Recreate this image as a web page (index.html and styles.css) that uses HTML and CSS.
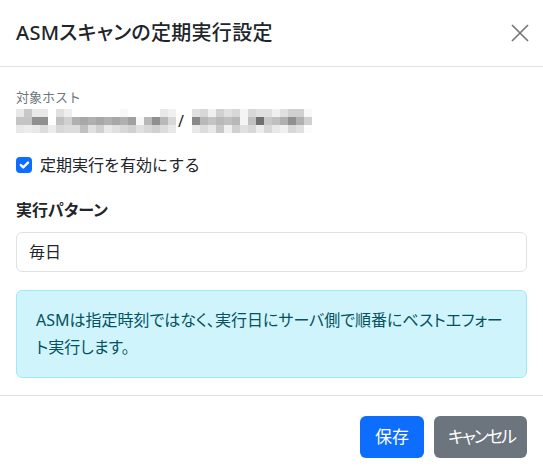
FILE: index.html
```html
<!DOCTYPE html>
<html lang="ja">
<head>
    <meta charset="UTF-8">
    <meta name="viewport" content="width=device-width, initial-scale=1">
    <title>ASMスキャンの定期実行設定</title>
    <link rel="stylesheet" href="styles.css">
</head>
<body>
    <div class="modal">
        <div class="modal-header">
            <h5 class="modal-title">ASMスキャンの定期実行設定</h5>
            <button class="btn-close" type="button" aria-label="閉じる">
                <svg viewBox="0 0 18 18" width="18" height="18">
                    <path d="M1 1L17 17M17 1L1 17" stroke="currentColor" stroke-width="1.7" fill="none"/>
                </svg>
            </button>
        </div>

        <div class="modal-body">
            <div class="field-caption">対象ホスト</div>
            <div class="host-line">
                <span class="mosaic" id="hostName"></span>
                <span class="sep">/</span>
                <span class="mosaic" id="hostAddr"></span>
            </div>

            <label class="form-check">
                <input type="checkbox" class="check-input" checked>
                <span class="check-box">
                    <svg viewBox="0 0 20 20" width="16" height="16">
                        <path d="m6 10 3 3 6-6" stroke="#fff" stroke-width="3" fill="none" stroke-linecap="round" stroke-linejoin="round"/>
                    </svg>
                </span>
                <span class="check-label">定期実行を有効にする</span>
            </label>

            <div class="form-label">実行パターン</div>
            <div class="form-select">毎日</div>

            <div class="alert-info">ASMは指定時刻ではなく、実行日にサーバ側で順番にベストエフォート実行します。</div>
        </div>

        <div class="modal-footer">
            <button class="btn btn-primary" type="button">保存</button>
            <button class="btn btn-secondary" type="button">キャンセル</button>
        </div>
    </div>

    <script>
        // masked host values, one grey level per 8px cell, three rows each
        const masks = {
            hostName: [
                'e8 c8 e8 e8 ff e0 ee ff ff ff ff ff ff f8 ff ff ff ff e8 f0',
                'c4 c4 90 90 ff c0 d0 b0 a8 b0 a8 b0 a8 b0 a0 f8 b8 90 b8 d8',
                'e8 ec e8 dc ec d8 dc dc c0 e0 d0 e8 e0 d8 d0 e0 d8 d0 dc e8'
            ],
            hostAddr: [
                'e0 d8 f0 d0 e0 d8 f4 d8 e0 e0 f0 e0 d0 d0 f8',
                '88 b8 c4 b8 c0 b8 f4 c0 70 c8 c0 b0 90 b0 d0',
                'e8 dc e8 c8 f0 d0 e0 d8 ec d8 e8 f0 d8 e0 fc'
            ]
        };

        Object.keys(masks).forEach((id) => {
            const box = document.getElementById(id);
            const rows = masks[id].map(r => r.split(' '));
            box.style.gridTemplateColumns = `repeat(${rows[0].length}, 8px)`;
            rows.forEach((row) => {
                row.forEach((g) => {
                    const cell = document.createElement('i');
                    cell.style.background = `#${g}${g}${g}`;
                    box.appendChild(cell);
                });
            });
        });
    </script>
</body>
</html>
```

FILE: styles.css
```css
* {
    box-sizing: border-box;
}

body {
    margin: 0;
    background-color: #fff;
    color: #212529;
    font-family: "Noto Sans", "Noto Sans CJK JP", sans-serif;
    font-size: 16px;
    line-height: 1.5;
    font-feature-settings: "palt";
}

.modal {
    width: 543px;
    height: 474px;
    display: flex;
    flex-direction: column;
}

.modal-header {
    display: flex;
    align-items: center;
    padding: 16px;
    border-bottom: 1px solid #dee2e6;
    height: 67px;
}

.modal-title {
    margin: 0;
    font-size: 20px;
    font-weight: 500;
    line-height: 34px;
    letter-spacing: 0.3px;
}

.btn-close {
    margin-left: auto;
    margin-right: -2px;
    padding: 0;
    border: none;
    background: none;
    color: #777;
    width: 18px;
    height: 18px;
    display: flex;
}

.modal-body {
    padding: 20px 16px 17px;
}

.field-caption {
    font-size: 13px;
    line-height: 21px;
    color: #6c757d;
    font-feature-settings: normal;
}

.host-line {
    display: flex;
    align-items: center;
    height: 24px;
    margin-top: 1px;
}

.mosaic {
    display: grid;
    grid-auto-rows: 8px;
}

.sep {
    margin: 0 8px 0 2px;
    line-height: 24px;
}

.form-check {
    display: flex;
    align-items: center;
    gap: 8px;
    margin-top: 20px;
    line-height: 24px;
}

.check-label {
    font-feature-settings: normal;
}

.check-input {
    display: none;
}

.check-box {
    width: 16px;
    height: 16px;
    border-radius: 4px;
    background-color: #0d6efd;
    display: flex;
}

.form-label {
    margin-top: 21px;
    font-weight: 700;
    line-height: 24px;
}

.form-select {
    margin-top: 10px;
    height: 40px;
    padding: 7px 12px;
    border: 1px solid #dee2e6;
    border-radius: 6px;
    line-height: 24px;
}

.alert-info {
    margin-top: 18px;
    padding: 16px 17px 16px 19px;
    background-color: #cff4fc;
    border: 1px solid #9eeaf9;
    border-radius: 6px;
    color: #055160;
    line-height: 27px;
}

.modal-footer {
    border-top: 1px solid #dee2e6;
    display: flex;
    justify-content: flex-end;
    gap: 10px;
    padding: 20px 16px 14px;
}

.btn {
    font: inherit;
    font-size: 17px;
    font-feature-settings: "palt";
    line-height: 24px;
    height: 42px;
    padding: 0 15px;
    border: none;
    border-radius: 6px;
    color: #fff;
}

.btn-primary {
    background-color: #0d6efd;
}

/* kana run narrower in this button */
.btn-secondary {
    background-color: #6c757d;
    padding: 0 12px 0 14px;
    letter-spacing: -2px;
}
```
